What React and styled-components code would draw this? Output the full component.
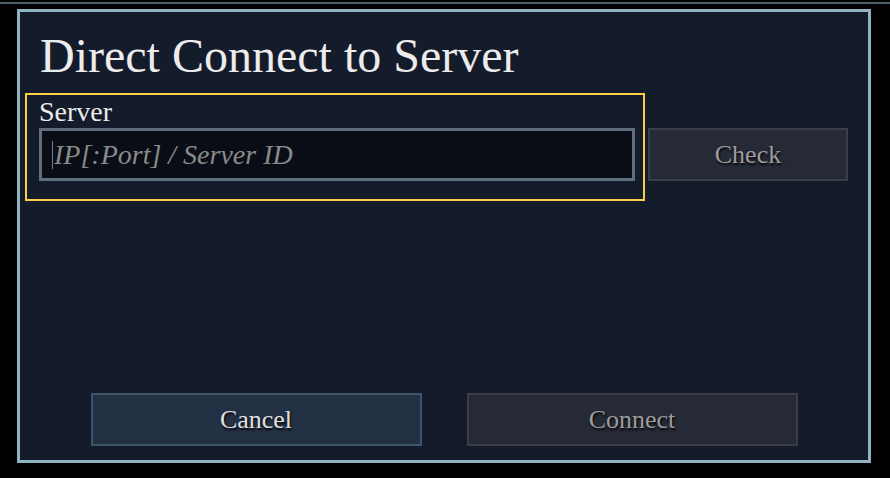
import styled, { createGlobalStyle } from 'styled-components';

const GlobalStyle = createGlobalStyle`
    html, body {
        margin: 0;
        padding: 0;
        background: #000000;
    }
    body {
        width: 890px;
        height: 478px;
        overflow: hidden;
        font-family: "Liberation Serif", "Times New Roman", serif;
    }
`;

const TopLine = styled.div`
    height: 2px;
    margin-top: 2px;
    background: #4f626a;
`;

const Dialog = styled.div`
    display: flex;
    flex-direction: column;
    box-sizing: border-box;
    width: 854px;
    height: 454px;
    margin: 5px 0 0 17px;
    padding: 20px 20px 14px 20px;
    background: #141b2b;
    border: 3px solid #8fb4c0;
`;

const Title = styled.h1`
    margin: 0;
    font-size: 48px;
    font-weight: 400;
    line-height: 48px;
    color: #ececec;
`;

const ServerRow = styled.div`
    display: flex;
    align-items: flex-start;
    margin-top: 13px;
`;

const FieldGroup = styled.div`
    display: flex;
    flex-direction: column;
    margin-left: -15px;
    padding: 3px 8px 18px 12px;
    border: 2px solid #fbcf45;
`;

const Label = styled.label`
    font-size: 28px;
    line-height: 28px;
    color: #ebebeb;
`;

const InputFrame = styled.div`
    display: flex;
    align-items: center;
    box-sizing: border-box;
    width: 596px;
    height: 53px;
    margin-top: 2px;
    padding-left: 10px;
    background: #0a0d15;
    border: 3px solid #5f6e7d;
`;

const Caret = styled.span`
    width: 1px;
    height: 28px;
    margin-right: 1px;
    background: #7a7f86;
`;

const TextInput = styled.input`
    flex: 1;
    min-width: 0;
    padding: 0;
    border: none;
    outline: none;
    background: transparent;
    font-family: "Liberation Serif", "Times New Roman", serif;
    font-size: 28px;
    font-style: italic;
    color: #d8d8d8;
    caret-color: transparent;

    &::placeholder {
        color: #8a8a8a;
        opacity: 1;
    }
`;

const Button = styled.button`
    box-sizing: border-box;
    width: ${(props) => props.$width}px;
    height: 53px;
    padding: 0;
    font-family: "Liberation Serif", "Times New Roman", serif;
    font-size: 26px;
    text-shadow: 1px 2px 2px rgba(0, 0, 0, 0.9);
    cursor: pointer;
    background: ${(props) => (props.$active ? '#243044' : '#262936')};
    border: 2px solid ${(props) => (props.$active ? '#3e5469' : '#3b3e48')};
    color: ${(props) => (props.$active ? '#e0e0e0' : '#9c9c9c')};
`;

const CheckButton = styled(Button)`
    margin-top: 35px;
    margin-left: 3px;
`;

const Spacer = styled.div`
    flex: 1;
`;

const Footer = styled.div`
    display: flex;
    justify-content: center;
    gap: 45px;
`;

export default function App() {
    return (
        <>
            <GlobalStyle />
            <TopLine />
            <Dialog>
                <Title>Direct Connect to Server</Title>
                <ServerRow>
                    <FieldGroup>
                        <Label htmlFor="server">Server</Label>
                        <InputFrame>
                            <Caret />
                            <TextInput id="server" placeholder="IP[:Port] / Server ID" />
                        </InputFrame>
                    </FieldGroup>
                    <CheckButton $width={200}>Check</CheckButton>
                </ServerRow>
                <Spacer />
                <Footer>
                    <Button $width={331} $active>Cancel</Button>
                    <Button $width={331}>Connect</Button>
                </Footer>
            </Dialog>
        </>
    );
}
